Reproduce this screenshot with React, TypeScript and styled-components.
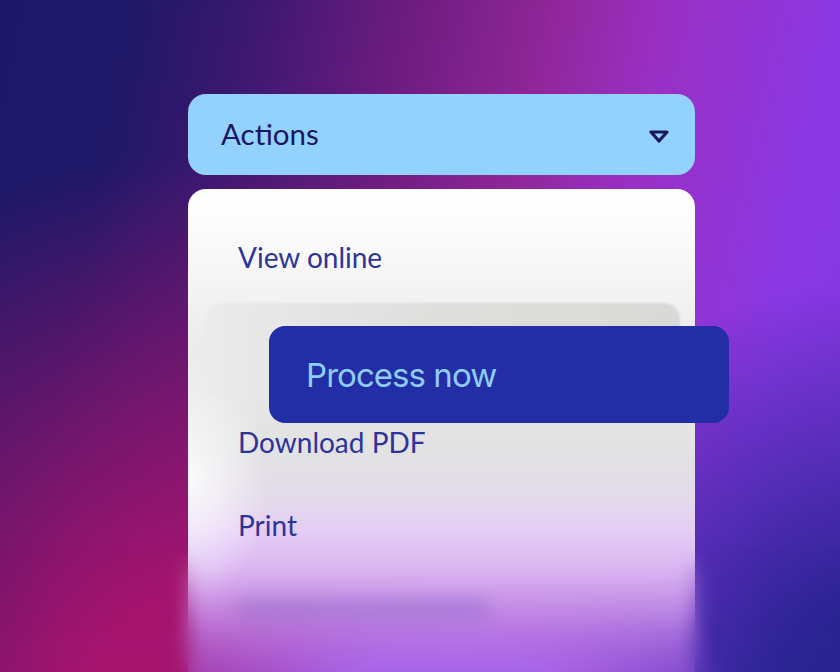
import React from "react";
import styled, { createGlobalStyle } from "styled-components";

const GlobalStyle = createGlobalStyle`
  html, body {
    margin: 0;
    padding: 0;
    background: #1f1868;
  }
`;

const Stage = styled.div`
  position: relative;
  width: 840px;
  height: 672px;
  overflow: hidden;
  box-sizing: border-box;
  padding: 94px 0 0 188px;
  font-family: "Lato", "Noto Sans", sans-serif;
  background:
    radial-gradient(ellipse 280px 120px at 450px 695px, #a462ea 0%, #a462ea 40%, rgba(164, 98, 234, 0) 100%),
    radial-gradient(ellipse 400px 430px at 870px 710px, #272390 0%, rgba(39, 35, 144, 0.95) 25%, rgba(39, 35, 144, 0) 100%),
    radial-gradient(ellipse 520px 560px at 190px 720px, #a5146e 0%, #a5146e 22%, rgba(165, 20, 110, 0.55) 58%, rgba(165, 20, 110, 0) 100%),
    linear-gradient(102deg, #1f1868 0%, #201868 14%, #3c1870 26%, #6e1c80 42%, #8f2698 56%, #9a30c4 68%, #8a38e4 86%, #8436e0 100%);
`;

const Dropdown = styled.div`
  display: flex;
  align-items: center;
  justify-content: space-between;
  box-sizing: border-box;
  width: 507px;
  height: 81px;
  padding: 0 26px 2px 33px;
  border-radius: 18px;
  background: #93d2ff;
  color: #1a1660;
  font-size: 29.5px;
`;

const Caret = styled.svg`
  width: 20px;
  height: 13px;
  margin-top: 6px;
`;

const Menu = styled.div`
  box-sizing: border-box;
  width: 507px;
  height: 560px;
  margin-top: 14px;
  padding-top: 27px;
  border-radius: 18px 18px 0 0;
  color: #2d3499;
  font-size: 28px;
  background:
    radial-gradient(ellipse 80px 130px at 0 290px, rgba(255, 255, 255, 0.85) 0%, rgba(255, 255, 255, 0) 100%),
    linear-gradient(
      180deg,
      #ffffff 0%,
      #fafafa 10%,
      #eeeeee 24%,
      #e2e2e3 46%,
      #e3dbe9 55%,
      rgb(229, 205, 246) 61%,
      rgb(220, 186, 242) 67%,
      rgba(206, 156, 236, 0.95) 73%,
      rgba(185, 122, 230, 0.78) 80%,
      rgba(168, 100, 228, 0.5) 86%,
      rgba(165, 96, 226, 0.15) 92%,
      rgba(165, 96, 226, 0) 100%
    );
`;

const Row = styled.div`
  display: flex;
  align-items: center;
  box-sizing: border-box;
  height: 83px;
  padding: 0 0 2px 50px;
`;

const Highlight = styled.div`
  width: 475px;
  height: 94px;
  margin: 4px 0 4px 17px;
  border-radius: 16px;
  background: linear-gradient(90deg, #ebebeb 0%, #dfdfde 45%, #d9d9d8 100%);
  filter: blur(1px);
`;

const FadedBar = styled.div`
  width: 252px;
  height: 20px;
  border-radius: 6px;
  background: rgba(110, 90, 190, 0.32);
  filter: blur(6px);
`;

const ProcessCard = styled.div`
  position: absolute;
  left: 269px;
  top: 326px;
  display: flex;
  align-items: center;
  box-sizing: border-box;
  width: 460px;
  height: 97px;
  padding-left: 37px;
  border-radius: 16px;
  background: #222da6;
  color: #8fcdff;
  font-family: "Inter", "Lato", sans-serif;
  font-size: 33px;
  letter-spacing: -0.95px;
`;

const BottomBlur = styled.div`
  position: absolute;
  left: 0;
  right: 0;
  bottom: 0;
  height: 125px;
  backdrop-filter: blur(10px);
  mask-image: linear-gradient(180deg, rgba(0, 0, 0, 0) 0%, #000 70%);
`;

const App = (): JSX.Element => {
  return (
    <Stage>
      <GlobalStyle />
      <Dropdown>
        Actions
        <Caret viewBox="0 0 20 13" fill="none">
          <path
            d="M2 2 H18 L10 11 Z"
            stroke="#1a1660"
            strokeWidth="3.2"
            strokeLinejoin="round"
          />
        </Caret>
      </Dropdown>
      <Menu>
        <Row>View online</Row>
        <Highlight />
        <Row>Download PDF</Row>
        <Row>Print</Row>
        <Row>
          <FadedBar />
        </Row>
      </Menu>
      <BottomBlur />
      <ProcessCard>Process now</ProcessCard>
    </Stage>
  );
};

export default App;
